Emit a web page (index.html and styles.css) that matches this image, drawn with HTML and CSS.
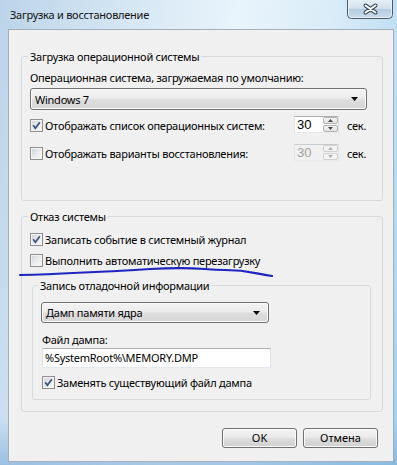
FILE: index.html
```html
<!DOCTYPE html>
<html lang="ru">
<head>
<meta charset="utf-8">
<title>Загрузка и восстановление</title>
<link rel="stylesheet" href="styles.css">
</head>
<body>
<div class="window">
  <div class="titlebar">
    <span class="title">Загрузка и восстановление</span>
    <button class="close" aria-label="Закрыть">
      <svg width="46" height="19" viewBox="0 0 46 19">
        <defs>
          <linearGradient id="cg" x1="0" y1="0" x2="0" y2="1">
            <stop offset="0" stop-color="#e6eff7"/>
            <stop offset="0.45" stop-color="#d2e1ee"/>
            <stop offset="0.5" stop-color="#b5cce0"/>
            <stop offset="1" stop-color="#c9dcec"/>
          </linearGradient>
        </defs>
        <path d="M0.5 0 V14.5 Q0.5 18.5 4.5 18.5 H41.5 Q45.5 18.5 45.5 14.5 V0" fill="url(#cg)" stroke="#4b5968"/>
        <path d="M1.5 0 V14 Q1.5 17.5 5 17.5 H41 Q44.5 17.5 44.5 14 V0" fill="none" stroke="#f4f8fb" stroke-opacity="0.7"/>
        <path d="M18.5 5.5 L28.5 12.5 M28.5 5.5 L18.5 12.5" stroke="#3a4858" stroke-width="4" stroke-linecap="round"/>
        <path d="M18.5 5.5 L28.5 12.5 M28.5 5.5 L18.5 12.5" stroke="#ffffff" stroke-width="2" stroke-linecap="round"/>
      </svg>
    </button>
  </div>

  <div class="client">
    <fieldset class="group g1">
      <legend>Загрузка операционной системы</legend>
      <div class="label">Операционная система, загружаемая по умолчанию:</div>
      <div class="combo combo-os">
        <span>Windows 7</span>
        <svg class="arrow" width="7" height="4" viewBox="0 0 7 4"><path d="M0 0H7L3.5 4Z" fill="#000"/></svg>
      </div>
      <div class="spinrow r1">
        <label class="check"><span class="cb on"><svg viewBox="0 0 13 13" width="13" height="13"><path d="M3.2 6.3 L5.4 9.2 L9.8 3.2"/></svg></span>Отображать список операционных систем:</label>
        <div class="spin">
          <span class="val">30</span>
          <span class="arrows">
            <span class="ab"><svg width="5" height="3" viewBox="0 0 5 3"><path d="M0 3H5L2.5 0Z"/></svg></span>
            <span class="ab"><svg width="5" height="3" viewBox="0 0 5 3"><path d="M0 0H5L2.5 3Z"/></svg></span>
          </span>
        </div>
        <span class="unit">сек.</span>
      </div>
      <div class="spinrow r2">
        <label class="check"><span class="cb"></span>Отображать варианты восстановления:</label>
        <div class="spin disabled">
          <span class="val">30</span>
          <span class="arrows">
            <span class="ab"><svg width="5" height="3" viewBox="0 0 5 3"><path d="M0 3H5L2.5 0Z"/></svg></span>
            <span class="ab"><svg width="5" height="3" viewBox="0 0 5 3"><path d="M0 0H5L2.5 3Z"/></svg></span>
          </span>
        </div>
        <span class="unit">сек.</span>
      </div>
    </fieldset>

    <fieldset class="group g2">
      <legend>Отказ системы</legend>
      <label class="check row-a"><span class="cb on"><svg viewBox="0 0 13 13" width="13" height="13"><path d="M3.2 6.3 L5.4 9.2 L9.8 3.2"/></svg></span>Записать событие в системный журнал</label>
      <label class="check row-b"><span class="cb"></span>Выполнить автоматическую перезагрузку</label>

      <fieldset class="group sub">
        <legend>Запись отладочной информации</legend>
        <div class="combo combo-dump">
          <span>Дамп памяти ядра</span>
          <svg class="arrow" width="7" height="4" viewBox="0 0 7 4"><path d="M0 0H7L3.5 4Z" fill="#000"/></svg>
        </div>
        <div class="label file-label">Файл дампа:</div>
        <div class="input">%SystemRoot%\MEMORY.DMP</div>
        <label class="check row-c"><span class="cb on"><svg viewBox="0 0 13 13" width="13" height="13"><path d="M3.2 6.3 L5.4 9.2 L9.8 3.2"/></svg></span>Заменять существующий файл дампа</label>
      </fieldset>
    </fieldset>

    <div class="buttons">
      <button class="btn">OK</button>
      <button class="btn">Отмена</button>
    </div>
  </div>

  <svg class="scribble" width="397" height="465" viewBox="0 0 397 465">
    <path d="M20 275 C 60 274, 100 272, 150 269 S 200 270, 225 270 S 255 274, 272 276" fill="none" stroke="#1f25c0" stroke-width="2.2" stroke-linecap="round"/>
  </svg>
</div>
</body>
</html>
```

FILE: styles.css
```css
* { box-sizing: border-box; }
html, body { margin: 0; padding: 0; }
body {
  width: 397px;
  height: 465px;
  overflow: hidden;
  font-family: "Noto Sans", "Liberation Sans", sans-serif;
  font-size: 11px;
  letter-spacing: -0.25px;
  line-height: 15px;
  color: #000;
}

.window {
  position: relative;
  width: 397px;
  height: 465px;
  display: flex;
  flex-direction: column;
  background:
    linear-gradient(180deg, rgba(255,255,255,0) 0%, rgba(255,255,255,0) 90%, rgba(120,170,215,0.6) 100%),
    linear-gradient(100deg, #bcd4e9 0%, #d3e5f3 25%, #e9f4fb 50%, #d9ecf8 70%, #b4daf1 90%, #9fd0ee 100%);
}

.titlebar {
  height: 29px;
  display: flex;
  justify-content: space-between;
  align-items: flex-start;
}
.title {
  padding: 7px 0 0 10px;
  color: #111;
}
.close {
  width: 46px;
  height: 19px;
  margin-right: 4px;
  padding: 0;
  border: 0;
  background: none;
  display: block;
}
.close svg { display: block; }

.client {
  margin: 0 3px 0 8px;
  height: 433px;
  background: #f0f0f0;
  border: 1px solid #a3afba;
  padding: 19px 10px 0 12px;
}

.group {
  margin: 0;
  border: 1px solid #d5dadf;
  border-radius: 3px;
  min-width: 0;
}
.group legend {
  padding: 0 2px;
  margin-left: -2px;
  line-height: 15px;
}

.g1 { padding: 6px 8px 39px 8px; }
.g2 { margin-top: 8px; padding: 8px 8px 11px 8px; }
.sub { margin: 10px 0 0 2px; width: 339px; padding: 9px 8px 9px 8px; }
.sub legend { margin-left: -3px; }

.label { line-height: 15px; }

.combo {
  margin-top: 3px;
  height: 22px;
  border: 1px solid #707070;
  border-radius: 3px;
  background: linear-gradient(180deg, #f3f3f3 0%, #ececec 45%, #dedede 55%, #d6d6d6 100%);
  box-shadow: inset 0 0 0 1px #fafafa;
  display: flex;
  align-items: center;
  justify-content: space-between;
  padding: 0 8px 0 4px;
}
.combo-os { width: 337px; }
.combo-dump { margin-top: 0; width: 228px; height: 21px; }
.arrow { display: block; }

.spinrow {
  display: grid;
  grid-template-columns: 256px 45px auto;
  column-gap: 8px;
  align-items: end;
  height: 17px;
}
.spinrow.r1 { margin-top: 6px; }
.spinrow.r2 { margin-top: 11px; }

.check {
  display: flex;
  align-items: center;
  gap: 2px;
  line-height: 15px;
  white-space: nowrap;
}
.cb {
  flex: none;
  width: 13px;
  height: 13px;
  border: 1px solid #8e8f8f;
  background: linear-gradient(135deg, #cdd1d6 0%, #e9eaec 50%, #f8f8f8 100%);
  box-shadow: inset 0 0 0 1px #f4f4f4;
  display: block;
  position: relative;
}
.cb svg {
  position: absolute;
  left: -1px;
  top: -1px;
}
.cb svg path {
  fill: none;
  stroke: #3d5684;
  stroke-width: 1.8;
}

.spin {
  height: 17px;
  border: 1px solid #abadb3;
  border-color: #abadb3 #dbdfe6 #e3e9ef #e2e3ea;
  background: #fff;
  display: flex;
}
.spin .val {
  flex: 1;
  padding-left: 2px;
  font-family: "Liberation Sans", sans-serif;
  font-size: 13px;
  letter-spacing: 0;
  line-height: 15px;
}
.arrows {
  width: 15px;
  display: flex;
  flex-direction: column;
  gap: 1px;
}
.ab {
  flex: 1;
  border: 1px solid #b2b2b2;
  border-radius: 2px;
  background: linear-gradient(180deg, #f4f4f4, #e3e3e3);
  display: flex;
  align-items: center;
  justify-content: center;
}
.ab svg path { fill: #4a4a4a; }
.spin.disabled { background: #f0f0f0; border-color: #c9ccd1 #e0e3e8 #e6eaee #e4e6eb; }
.spin.disabled .val { color: #a6a19d; }
.spin.disabled .ab { border-color: #d0d0d0; background: #f4f4f4; }
.spin.disabled .ab svg path { fill: #b0b0b0; }

.unit { line-height: 15px; }

.row-a { margin-top: 0; }
.row-b { margin-top: 6px; }

.file-label { margin: 9px 0 0 1px; }
.input {
  margin: 1px 0 0 1px;
  width: 229px;
  height: 20px;
  border: 1px solid;
  border-color: #abadb3 #dbdfe6 #e3e9ef #e2e3ea;
  background: #fff;
  padding-left: 2px;
  line-height: 18px;
}
.row-c { margin: 7px 0 0 1px; }

.buttons {
  display: flex;
  justify-content: flex-end;
  gap: 6px;
  margin-top: 16px;
  padding-right: 5px;
}
.btn {
  width: 75px;
  height: 20px;
  padding: 0;
  border: 1px solid #707070;
  border-radius: 3px;
  background: linear-gradient(180deg, #f3f3f3 0%, #ebebeb 45%, #dddddd 55%, #cfcfcf 100%);
  box-shadow: inset 0 0 0 1px #fbfbfb;
  font: inherit;
  line-height: 18px;
  color: #000;
}

.scribble {
  position: absolute;
  left: 0;
  top: 0;
  pointer-events: none;
}
```
